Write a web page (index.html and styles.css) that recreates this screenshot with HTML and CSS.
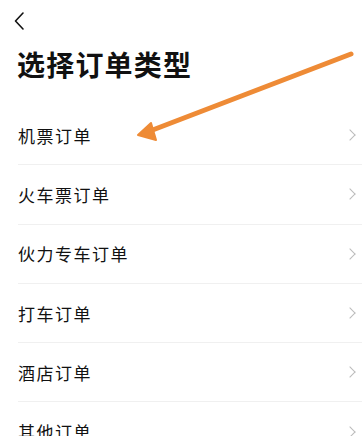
FILE: index.html
```html
<!DOCTYPE html>
<html lang="zh-CN">
<head>
    <meta charset="UTF-8">
    <meta name="viewport" content="width=device-width, initial-scale=1.0">
    <title>选择订单类型</title>
    <link rel="stylesheet" href="styles.css">
</head>
<body>
    <div class="trang">
        <div class="thanh-tren">
            <svg class="nut-lui" width="12" height="20" viewBox="0 0 12 20">
                <path d="M10 2 L2.5 10 L10 18" fill="none" stroke="#111" stroke-width="1.6" stroke-linecap="round" stroke-linejoin="round"/>
            </svg>
        </div>
        <h1 class="tieu-de">选择订单类型</h1>

        <ul class="danh-sach">
            <li class="dong"><span>机票订单</span><i class="mui-ten"></i></li>
            <li class="dong"><span>火车票订单</span><i class="mui-ten"></i></li>
            <li class="dong"><span>伙力专车订单</span><i class="mui-ten"></i></li>
            <li class="dong"><span>打车订单</span><i class="mui-ten"></i></li>
            <li class="dong"><span>酒店订单</span><i class="mui-ten"></i></li>
            <li class="dong"><span>其他订单</span><i class="mui-ten"></i></li>
        </ul>

        <!--mũi tên cam chỉ vào dòng đầu-->
        <svg class="chi-dan" width="362" height="436" viewBox="0 0 362 436">
            <line x1="351" y1="54" x2="150" y2="131" stroke="#ee8b36" stroke-width="5" stroke-linecap="round"/>
            <polygon points="138,135 151,123 156,140" fill="#ee8b36" stroke="#ee8b36" stroke-width="2" stroke-linejoin="round"/>
        </svg>
    </div>
</body>
</html>
```

FILE: styles.css
```css
*{
    box-sizing: border-box;
    padding: 0;
    margin: 0;
}
body{
    background-color: #fff;
    font-family: "Noto Sans CJK SC", "Noto Sans", sans-serif;
    color: #111;
}
.trang{
    position: relative;
    width: 362px;
    height: 436px;
    overflow: hidden;
}
.thanh-tren{
    height: 42px;
    padding: 11px 0 0 13px;
}
.nut-lui{
    display: block;
}
.tieu-de{
    font-size: 28px;
    font-weight: 700;
    letter-spacing: 1.2px;
    line-height: 40px;
    height: 64px;
    padding: 2px 0 0 17px;
}
.danh-sach{
    list-style: none;
    padding-left: 18px;
}
.dong{
    height: 59.3px;
    display: flex;
    align-items: center;
    justify-content: space-between;
    border-bottom: 1px solid #f0f0f0;
    font-size: 17px;
    letter-spacing: 1.5px;
    padding-right: 8px;
}
.mui-ten{
    width: 8px;
    height: 8px;
    border-top: 1px solid #bbb;
    border-right: 1px solid #bbb;
    transform: rotate(45deg);
}
.chi-dan{
    position: absolute;
    left: 0;
    top: 0;
}
```
